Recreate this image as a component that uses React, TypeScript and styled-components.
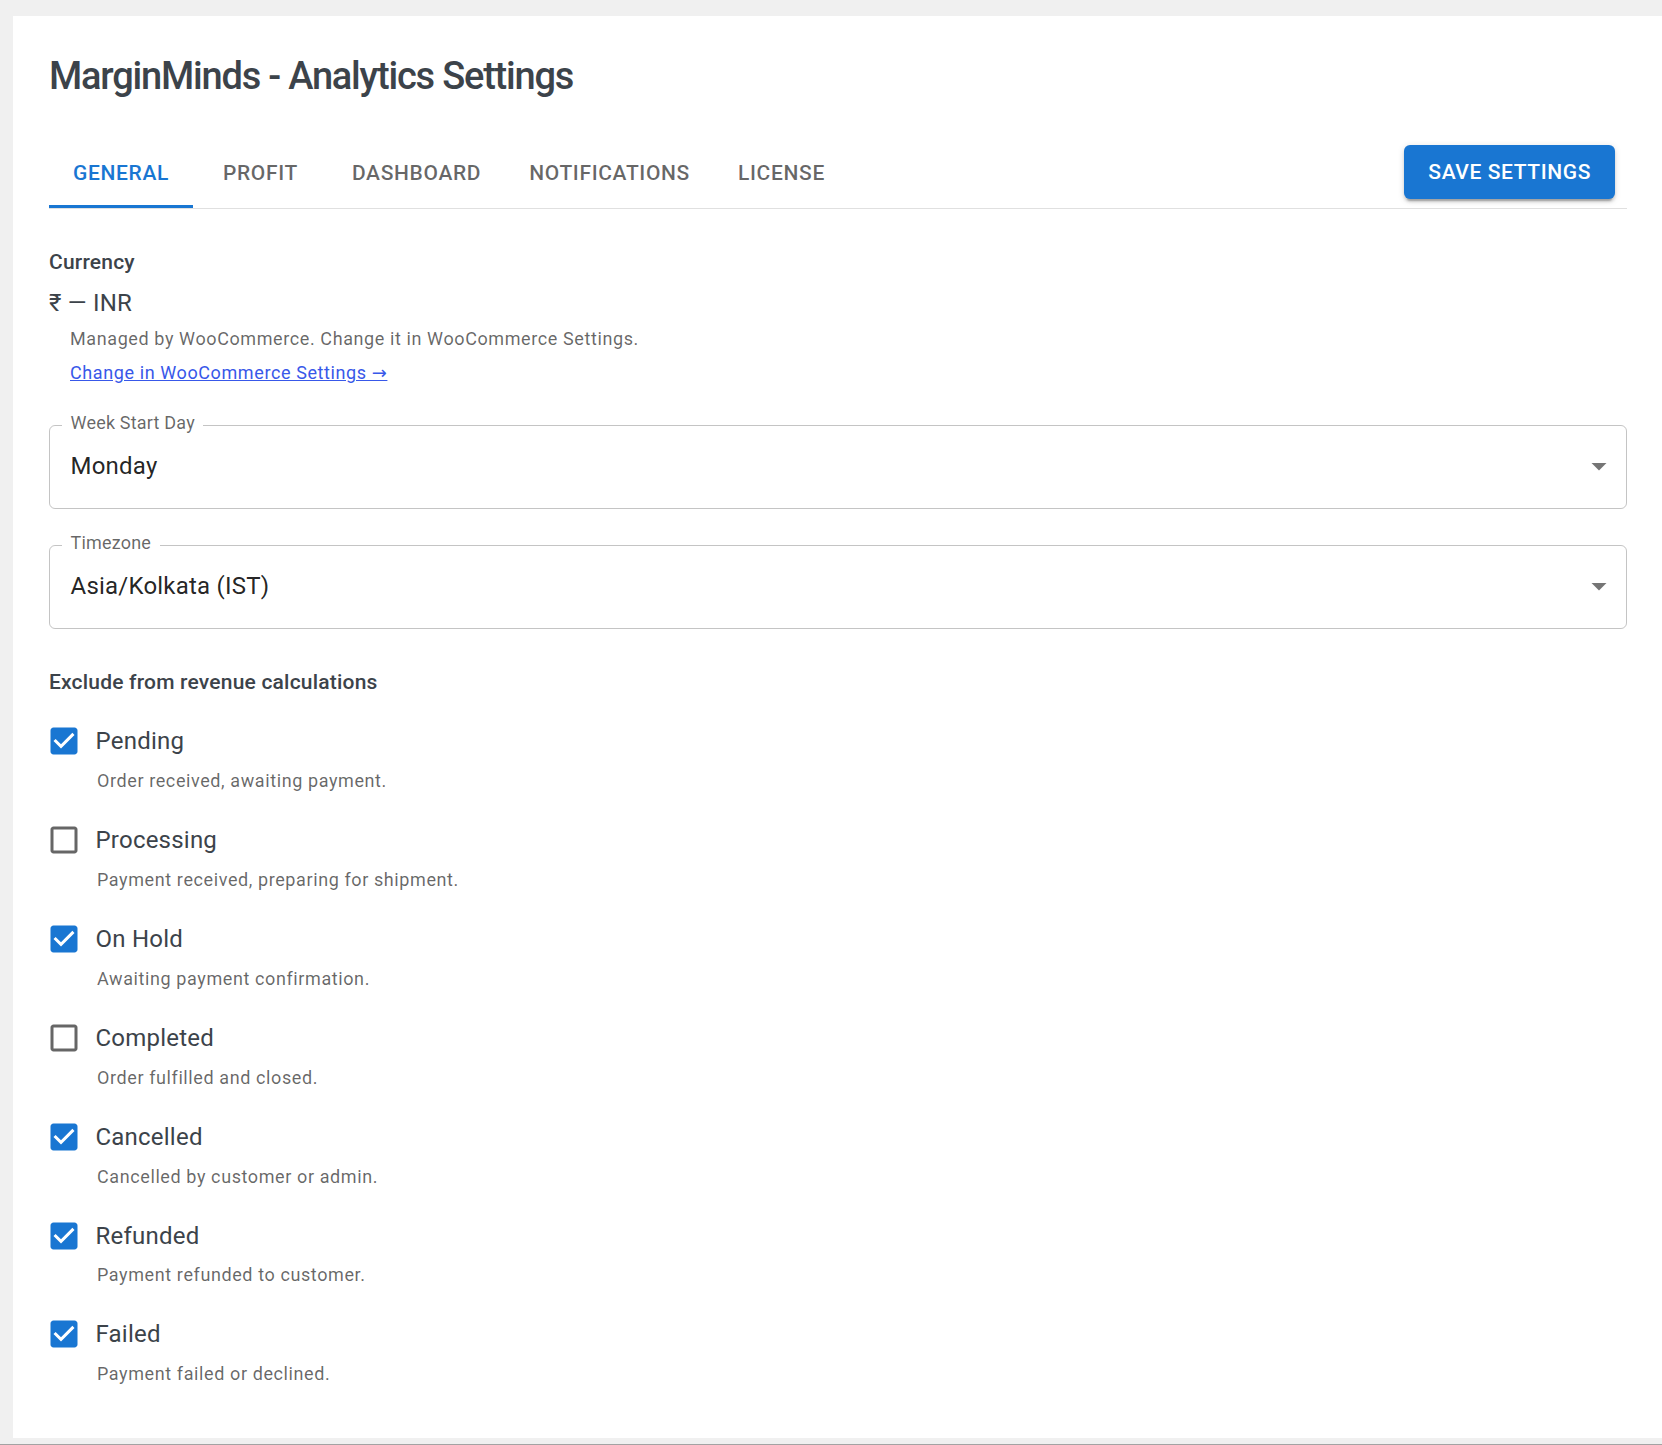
import React from "react";
import styled, { createGlobalStyle } from "styled-components";

const GlobalStyle = createGlobalStyle`
  html, body {
    margin: 0;
    background: #f0f0f0;
    overflow: hidden;
    font-family: Roboto, "Noto Sans", "DejaVu Sans", sans-serif;
  }
`;

const Page = styled.div`
  min-height: 1445px;
  box-sizing: border-box;
  padding: 16px 0 0 13px;
  border-bottom: 1px solid #a3a3a3;
`;

const Card = styled.div`
  width: 1650px;
  box-sizing: border-box;
  padding: 36px;
  background: #ffffff;
`;

const Title = styled.h1`
  margin: 0 0 36px;
  font-size: 38px;
  line-height: 48px;
  font-weight: 500;
  letter-spacing: -1.2px;
  color: #3c434a;
`;

const Header = styled.div`
  display: flex;
  align-items: center;
  justify-content: space-between;
  border-bottom: 1px solid #e0e0e0;
`;

const TabList = styled.div`
  display: flex;
  height: 72px;
`;

const Tab = styled.button<{ $active: boolean }>`
  min-width: 135px;
  padding: 19px 24px 17px;
  border: 0;
  background: none;
  font-family: Roboto, sans-serif;
  font-size: 21px;
  font-weight: 500;
  line-height: 1.25;
  letter-spacing: 0.65px;
  text-transform: uppercase;
  color: ${(p) => (p.$active ? "#1976d2" : "rgba(0, 0, 0, 0.6)")};
  box-shadow: ${(p) => (p.$active ? "inset 0 -3px 0 #1976d2" : "none")};
  cursor: pointer;
`;

const SaveButton = styled.button`
  margin-right: 12px;
  padding: 9px 24px;
  border: 0;
  border-radius: 6px;
  background: #1976d2;
  color: #ffffff;
  font-family: Roboto, sans-serif;
  font-size: 21px;
  font-weight: 500;
  line-height: 36.75px;
  letter-spacing: 0.6px;
  text-transform: uppercase;
  box-shadow: 0 4.5px 1.5px -3px rgba(0, 0, 0, 0.2),
    0 3px 3px 0 rgba(0, 0, 0, 0.14), 0 1.5px 7.5px 0 rgba(0, 0, 0, 0.12);
  cursor: pointer;
`;

const Panel = styled.div`
  padding-top: 37px;
`;

const SectionTitle = styled.div<{ $gap?: number }>`
  margin-top: ${(p) => p.$gap ?? 0}px;
  font-size: 21px;
  line-height: 33px;
  font-weight: 500;
  letter-spacing: 0.2px;
  color: #3c434a;
`;

const CurrencyValue = styled.div`
  margin-top: 6px;
  font-size: 24px;
  line-height: 36px;
  letter-spacing: 0.22px;
  color: #3c434a;
`;

const HelperText = styled.div`
  margin: 3px 0 0 21px;
  font-size: 18px;
  line-height: 29.88px;
  letter-spacing: 0.6px;
  color: rgba(0, 0, 0, 0.6);
`;

const HelperLink = styled.a`
  display: inline-block;
  margin: 4.5px 0 0 21px;
  font-size: 18px;
  line-height: 29.88px;
  letter-spacing: 0.6px;
  color: #3858e9;
  text-decoration: underline;
`;

const Field = styled.fieldset<{ $gap: number }>`
  margin: ${(p) => p.$gap}px 0 0;
  padding: 0 9px 0 12px;
  min-width: 0;
  border: 1px solid rgba(0, 0, 0, 0.23);
  border-radius: 6px;
`;

const FieldLabel = styled.legend`
  padding: 0 8.5px 5px;
  font-size: 18px;
  line-height: 18px;
  letter-spacing: 0.2px;
  color: rgba(0, 0, 0, 0.6);
`;

const SelectRow = styled.div`
  display: flex;
  align-items: center;
  justify-content: space-between;
  padding: 11px 0 23.5px 8.5px;
  font-size: 24px;
  line-height: 36px;
  letter-spacing: 0.22px;
  color: rgba(0, 0, 0, 0.87);
`;

const OptionList = styled.div`
  margin-top: 11px;
`;

const OptionLabel = styled.label`
  display: flex;
  align-items: center;
  height: 63px;
  margin-left: -16.5px;
  font-size: 24px;
  line-height: 36px;
  letter-spacing: 0.22px;
  color: #3c434a;
  cursor: pointer;
`;

const BoxWrap = styled.span<{ $checked: boolean }>`
  display: flex;
  padding: 13.5px;
  color: ${(p) => (p.$checked ? "#1976d2" : "rgba(0, 0, 0, 0.6)")};
`;

const OptionDesc = styled.div`
  margin: -6.6px 0 12.6px 48px;
  font-size: 18px;
  line-height: 29.88px;
  letter-spacing: 0.6px;
  color: rgba(0, 0, 0, 0.6);
`;

const tabs = ["General", "Profit", "Dashboard", "Notifications", "License"];

const statuses = [
  { label: "Pending", desc: "Order received, awaiting payment.", checked: true },
  { label: "Processing", desc: "Payment received, preparing for shipment.", checked: false },
  { label: "On Hold", desc: "Awaiting payment confirmation.", checked: true },
  { label: "Completed", desc: "Order fulfilled and closed.", checked: false },
  { label: "Cancelled", desc: "Cancelled by customer or admin.", checked: true },
  { label: "Refunded", desc: "Payment refunded to customer.", checked: true },
  { label: "Failed", desc: "Payment failed or declined.", checked: true },
];

function DropArrow() {
  return (
    <svg width="36" height="36" viewBox="0 0 24 24" fill="rgba(0,0,0,0.54)">
      <path d="M7 10l5 5 5-5z" />
    </svg>
  );
}

function CheckIcon({ checked }: { checked: boolean }) {
  return (
    <svg width="36" height="36" viewBox="0 0 24 24" fill="currentColor">
      {checked ? (
        <path d="M19 3H5c-1.11 0-2 .9-2 2v14c0 1.1.89 2 2 2h14c1.11 0 2-.9 2-2V5c0-1.1-.89-2-2-2zm-9 14l-5-5 1.41-1.41L10 14.17l7.59-7.59L19 8l-9 9z" />
      ) : (
        <path d="M19 5v14H5V5h14m0-2H5c-1.1 0-2 .9-2 2v14c0 1.1.9 2 2 2h14c1.1 0 2-.9 2-2V5c0-1.1-.9-2-2-2z" />
      )}
    </svg>
  );
}

function SelectField({ label, value, gap }: { label: string; value: string; gap: number }) {
  return (
    <Field $gap={gap}>
      <FieldLabel>{label}</FieldLabel>
      <SelectRow>
        <span>{value}</span>
        <DropArrow />
      </SelectRow>
    </Field>
  );
}

export default function App() {
  return (
    <>
      <GlobalStyle />
      <Page>
        <Card>
          <Title>MarginMinds - Analytics Settings</Title>
          <Header>
            <TabList>
              {tabs.map((t, i) => (
                <Tab key={t} $active={i === 0}>
                  {t}
                </Tab>
              ))}
            </TabList>
            <SaveButton>Save Settings</SaveButton>
          </Header>

          <Panel>
            <SectionTitle>Currency</SectionTitle>
            <CurrencyValue>₹ — INR</CurrencyValue>
            <HelperText>Managed by WooCommerce. Change it in WooCommerce Settings.</HelperText>
            <HelperLink href="#">Change in WooCommerce Settings →</HelperLink>

            <SelectField label="Week Start Day" value="Monday" gap={26} />
            <SelectField label="Timezone" value="Asia/Kolkata (IST)" gap={25.4} />

            <SectionTitle $gap={37}>Exclude from revenue calculations</SectionTitle>
            <OptionList>
              {statuses.map((s) => (
                <div key={s.label}>
                  <OptionLabel>
                    <BoxWrap $checked={s.checked}>
                      <CheckIcon checked={s.checked} />
                    </BoxWrap>
                    {s.label}
                  </OptionLabel>
                  <OptionDesc>{s.desc}</OptionDesc>
                </div>
              ))}
            </OptionList>
          </Panel>
        </Card>
      </Page>
    </>
  );
}
